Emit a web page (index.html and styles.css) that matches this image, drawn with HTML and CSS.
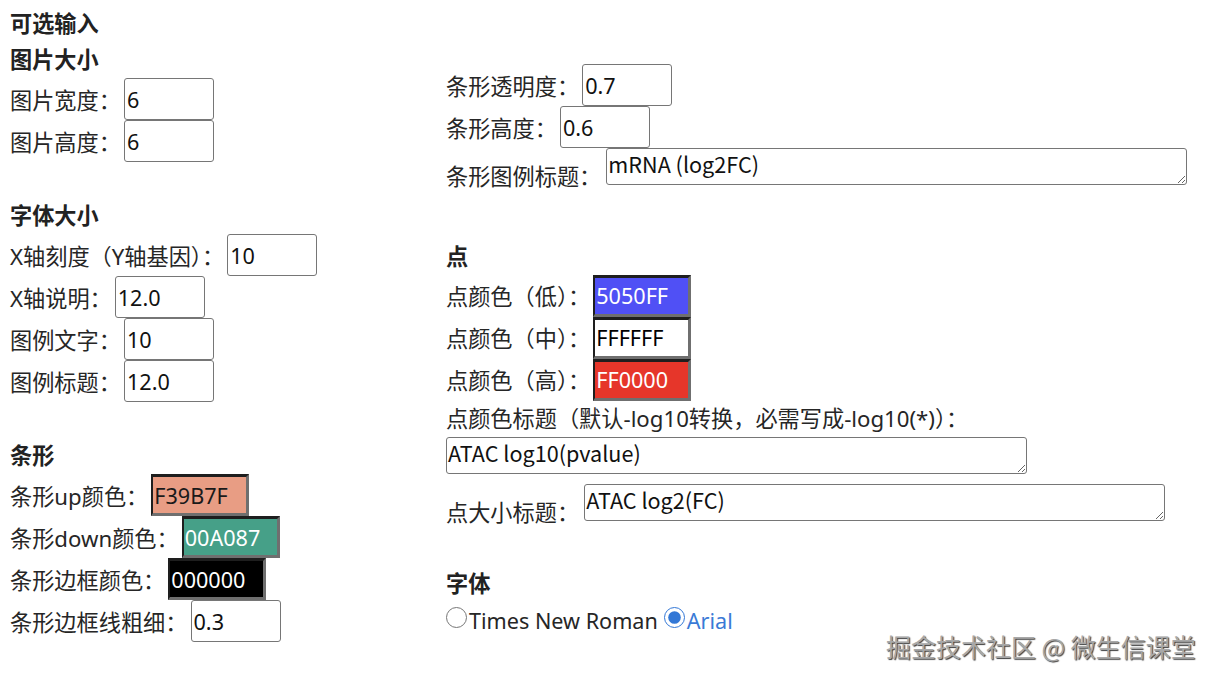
FILE: index.html
```html
<!DOCTYPE html>
<html lang="zh-CN">
<head>
    <meta charset="UTF-8">
    <title>可选输入</title>
    <link rel="stylesheet" href="styles.css">
</head>
<body>
    <div class="page">
        <div class="col left">
            <h3 class="title">可选输入</h3>
            <h3>图片大小</h3>
            <div class="row">图片宽度：<input class="num" type="text" value="6"></div>
            <div class="row">图片高度：<input class="num" type="text" value="6"></div>

            <h3 class="section">字体大小</h3>
            <div class="row">X轴刻度（Y轴基因）：<input class="num" type="text" value="10"></div>
            <div class="row">X轴说明：<input class="num" type="text" value="12.0"></div>
            <div class="row">图例文字：<input class="num" type="text" value="10"></div>
            <div class="row">图例标题：<input class="num" type="text" value="12.0"></div>

            <h3 class="section">条形</h3>
            <div class="row">条形up颜色：<input class="color c-up" type="text" value="F39B7F"></div>
            <div class="row">条形down颜色：<input class="color c-down" type="text" value="00A087"></div>
            <div class="row">条形边框颜色：<input class="color c-border" type="text" value="000000"></div>
            <div class="row">条形边框线粗细：<input class="num" type="text" value="0.3"></div>
        </div>

        <div class="col right">
            <div class="row">条形透明度：<input class="num" type="text" value="0.7"></div>
            <div class="row">条形高度：<input class="num" type="text" value="0.6"></div>
            <div class="line">条形图例标题：<textarea class="wide" rows="1">mRNA (log2FC)</textarea></div>

            <h3 class="section dot">点</h3>
            <div class="row">点颜色（低）：<input class="color c-low" type="text" value="5050FF"></div>
            <div class="row">点颜色（中）：<input class="color c-mid" type="text" value="FFFFFF"></div>
            <div class="row">点颜色（高）：<input class="color c-high" type="text" value="FF0000"></div>
            <div class="text">点颜色标题（默认-log10转换，必需写成-log10(*)）：</div>
            <textarea class="wide" rows="1">ATAC log10(pvalue)</textarea>
            <div class="line">点大小标题：<textarea class="wide" rows="1">ATAC log2(FC)</textarea></div>

            <h3 class="section font">字体</h3>
            <div class="radios">
                <label><input type="radio" name="font" value="Times New Roman">Times New Roman</label>
                <label class="on"><input type="radio" name="font" value="Arial" checked>Arial</label>
            </div>
        </div>
    </div>

    <div class="mark">掘金技术社区 @ 微生信课堂</div>
</body>
</html>
```

FILE: styles.css
```css
body {
    margin: 6px 10px;
    font-family: "Noto Sans", "Noto Sans CJK SC", sans-serif;
    font-size: 22.2px;
    color: #262626;
    background: #fff;
}

.page {
    display: flex;
}

.col.left {
    width: 436px;
    flex-shrink: 0;
}

.col.right {
    flex: 1;
    padding-top: 58px;
}

h3 {
    margin: 0;
    height: 36px;
    line-height: 36px;
    font-size: 22.2px;
    font-weight: bold;
    color: #222;
}

.section {
    margin-top: 36px;
}

.section.dot {
    margin-top: 48px;
}

.section.font {
    margin-top: 40px;
}

.row {
    display: flex;
    align-items: center;
    height: 42px;
    white-space: nowrap;
}

.row input {
    margin-left: 3px;
}

input {
    font-family: inherit;
    font-size: 21.6px;
    color: #111;
    outline: none;
}

.num {
    box-sizing: border-box;
    width: 90px;
    height: 42px;
    padding: 0 2px;
    border: 1px solid #767676;
    border-radius: 3px;
}

.color {
    box-sizing: border-box;
    width: 98px;
    height: 42px;
    padding: 0 1px;
    border: 3px solid;
    border-color: #1e1e1e #6f6f6f #6f6f6f #1e1e1e;
    border-width: 3px 3px 3px 2px;
}

.c-up { background: #e89d84; color: #1a1a1a; }
.c-down { background: #46a088; color: #fff; }
.c-border { background: #000; color: #fff; }
.c-low { background: #5050f5; color: #fff; }
.c-mid { background: #fff; color: #000; }
.c-high { background: #e6362a; color: #fff; }

.text {
    height: 36px;
    line-height: 36px;
    white-space: nowrap;
}

.line {
    white-space: nowrap;
    line-height: 1.2;
}

textarea.wide {
    box-sizing: border-box;
    width: 581px;
    height: 37px;
    margin: 0;
    padding: 0 1px;
    border: 1px solid #767676;
    border-radius: 3px;
    font-family: "Noto Sans CJK SC", sans-serif;
    font-size: 21.6px;
    line-height: 30px;
    color: #111;
    overflow: hidden;
    vertical-align: baseline;
}

.right > textarea.wide {
    display: block;
    margin-bottom: 10px;
}

.line textarea.wide {
    margin-left: 5px;
}

.radios {
    display: flex;
    align-items: center;
    height: 36px;
    font-size: 21.6px;
    white-space: nowrap;
}

.radios label {
    display: flex;
    align-items: center;
    margin-right: 6px;
}

.radios input {
    width: 21px;
    height: 21px;
    margin: 0 2px 5px 0;
    accent-color: #3277d6;
}

.radios label.on {
    color: #3a7ad6;
}

.mark {
    position: absolute;
    left: 886px;
    top: 628px;
    font-family: "Noto Sans CJK SC", sans-serif;
    font-size: 25px;
    color: #a8a8a8;
    text-shadow: 1px 1px 1px #3c3c3c;
    white-space: nowrap;
}
```
